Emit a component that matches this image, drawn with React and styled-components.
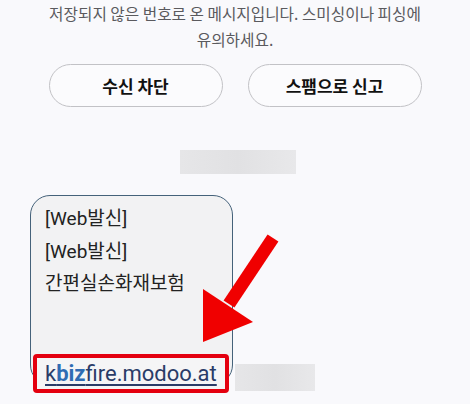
import React from "react";
import styled, { createGlobalStyle } from "styled-components";

const GlobalStyle = createGlobalStyle`
  html, body {
    margin: 0;
    padding: 0;
    background: #f9f9fc;
  }
`;

const Page = styled.div`
  position: relative;
  width: 470px;
  height: 404px;
  overflow: hidden;
  background: #f9f9fc;
  font-family: "Noto Sans CJK KR", "Noto Sans", sans-serif;
`;

const Notice = styled.p`
  margin: 0;
  padding-top: 1px;
  text-align: center;
  font-size: 15.7px;
  line-height: 26px;
  color: #5a5a5e;
`;

const ButtonRow = styled.div`
  display: flex;
  justify-content: center;
  gap: 25px;
  margin-top: 11px;
`;

const PillButton = styled.button`
  width: 174px;
  height: 43px;
  border: 1.5px solid #c2c2c6;
  border-radius: 22px;
  background: #fbfbfd;
  font-family: "Noto Sans CJK KR", sans-serif;
  font-weight: 700;
  font-size: 17px;
  color: #111;
`;

const Blur = styled.div`
  width: ${p => p.w}px;
  height: ${p => p.h}px;
  background: linear-gradient(90deg, #e6e6e8 0%, #e1e1e3 50%, #e8e8ea 100%);
`;

const DateBar = styled.div`
  display: flex;
  justify-content: center;
  margin-top: 43px;
  padding-left: 6px;
`;

const MessageRow = styled.div`
  display: flex;
  align-items: flex-end;
  gap: 2px;
  margin-top: 21px;
  padding-left: 30px;
`;

const Bubble = styled.div`
  width: 203px;
  box-sizing: border-box;
  padding: 7px 0 0 14px;
  border: 1.5px solid #45627a;
  border-radius: 20px;
  background: #f2f2f3;
  font-family: Roboto, "Noto Sans CJK KR", sans-serif;
  font-size: 19px;
  line-height: 32.5px;
  color: #222;
  height: 190px;
`;

const Line = styled.div``;

const LinkBox = styled.div`
  display: inline-block;
  margin: 53px 0 0 -12px;
  padding: 0 8px;
  border: 4px solid #e4000f;
  border-radius: 4px;
  background: #f5f5f6;
  font-size: 22px;
  line-height: 31px;
  white-space: nowrap;
`;

const Link = styled.a`
  color: #2a3c68;
  text-decoration: underline;
  text-underline-offset: 3px;
  text-decoration-thickness: 1.5px;
`;

const Hl = styled.span`
  color: #2f6cb3;
  font-weight: 700;
`;

const Stamp = styled(Blur)`
  margin-bottom: -6px;
`;

const Arrow = styled.svg`
  position: absolute;
  left: 0;
  top: 0;
  pointer-events: none;
`;

export default function App() {
  return (
    <Page>
      <GlobalStyle />
      <Notice>
        저장되지 않은 번호로 온 메시지입니다. 스미싱이나 피싱에
        <br />
        유의하세요.
      </Notice>
      <ButtonRow>
        <PillButton>수신 차단</PillButton>
        <PillButton>스팸으로 신고</PillButton>
      </ButtonRow>
      <DateBar>
        <Blur w={116} h={24} />
      </DateBar>
      <MessageRow>
        <Bubble>
          <Line>[Web발신]</Line>
          <Line>[Web발신]</Line>
          <Line>간편실손화재보험</Line>
          <LinkBox>
            <Link>
              k<Hl>biz</Hl>fire.modoo.at
            </Link>
          </LinkBox>
        </Bubble>
        <Stamp w={80} h={27} />
      </MessageRow>
      <Arrow width="470" height="404" viewBox="0 0 470 404">
        <line x1="273" y1="238" x2="229" y2="304" stroke="#f00000" strokeWidth="13" />
        <polygon points="203,289 253,322 203,342" fill="#f00000" />
      </Arrow>
    </Page>
  );
}
